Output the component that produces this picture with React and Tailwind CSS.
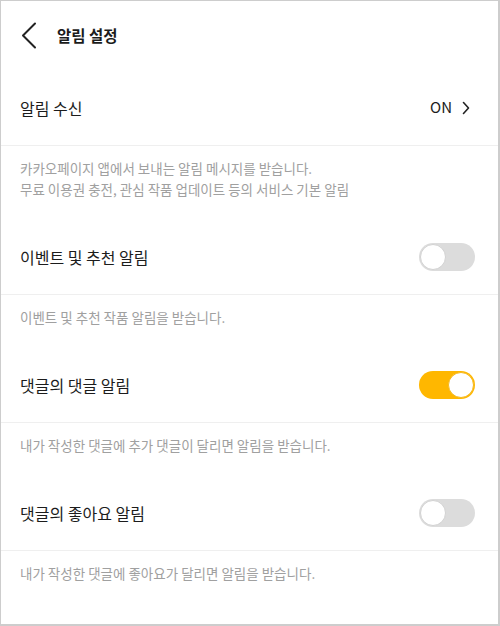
import { useState } from "react";

const font = { fontFamily: '"Noto Sans CJK KR", "Noto Sans", sans-serif' };

function Toggle({ on, onChange }) {
  return (
    <button
      type="button"
      role="switch"
      aria-checked={on}
      onClick={onChange}
      className={`relative h-[28px] w-[56px] shrink-0 rounded-full transition-colors ${
        on ? "bg-[#ffb700]" : "bg-[#dcdcdc]"
      }`}
    >
      <span
        className={`absolute top-[1px] h-[26px] w-[26px] rounded-full bg-white transition-all ${
          on
            ? "left-[29px] border-[1.5px] border-[#f5b81c]"
            : "left-[1px] border-[1.5px] border-[#d2d2d2]"
        }`}
      />
    </button>
  );
}

function Description({ children }) {
  return (
    <div className="px-[19px] pb-[19px] pt-[12px] text-[13.5px] leading-[21px] text-[#a0a0a0]">
      {children}
    </div>
  );
}

function Row({ label, children }) {
  return (
    <div className="flex h-[76px] items-center justify-between border-b border-[#efefef] pl-[19px] pr-[23px]">
      <span className="text-[16px] text-[#1c1c1c]">{label}</span>
      {children}
    </div>
  );
}

export default function App() {
  const [events, setEvents] = useState(false);
  const [replies, setReplies] = useState(true);
  const [likes, setLikes] = useState(false);

  return (
    <div
      style={font}
      className="h-[626px] w-[500px] overflow-hidden border-l border-t border-r-2 border-b-2 border-[#cdcdcd] bg-white"
    >
      <header className="flex h-[69px] items-center pl-[19px]">
        <button type="button" aria-label="뒤로" className="flex h-8 w-8 items-center">
          <svg width="18" height="28" viewBox="0 0 18 28" fill="none">
            <path d="M15 1.5L3 13.5l12 12" stroke="#222" strokeWidth="2" strokeLinecap="round" strokeLinejoin="round" />
          </svg>
        </button>
        <h1 className="ml-[5px] text-[15.5px] font-bold text-[#1c1c1c]">알림 설정</h1>
      </header>

      <Row label="알림 수신">
        <button type="button" className="flex items-center gap-[10px] text-[15px] text-[#1c1c1c]">
          ON
          <svg width="8" height="14" viewBox="0 0 8 14" fill="none" className="mr-[5px]">
            <path d="M1.5 1.5L6.5 7l-5 5.5" stroke="#222" strokeWidth="1.6" strokeLinecap="round" strokeLinejoin="round" />
          </svg>
        </button>
      </Row>
      <Description>
        카카오페이지 앱에서 보내는 알림 메시지를 받습니다.
        <br />
        무료 이용권 충전, 관심 작품 업데이트 등의 서비스 기본 알림
      </Description>

      <Row label="이벤트 및 추천 알림">
        <Toggle on={events} onChange={() => setEvents(!events)} />
      </Row>
      <Description>이벤트 및 추천 작품 알림을 받습니다.</Description>

      <Row label="댓글의 댓글 알림">
        <Toggle on={replies} onChange={() => setReplies(!replies)} />
      </Row>
      <Description>내가 작성한 댓글에 추가 댓글이 달리면 알림을 받습니다.</Description>

      <Row label="댓글의 좋아요 알림">
        <Toggle on={likes} onChange={() => setLikes(!likes)} />
      </Row>
      <Description>내가 작성한 댓글에 좋아요가 달리면 알림을 받습니다.</Description>
    </div>
  );
}
